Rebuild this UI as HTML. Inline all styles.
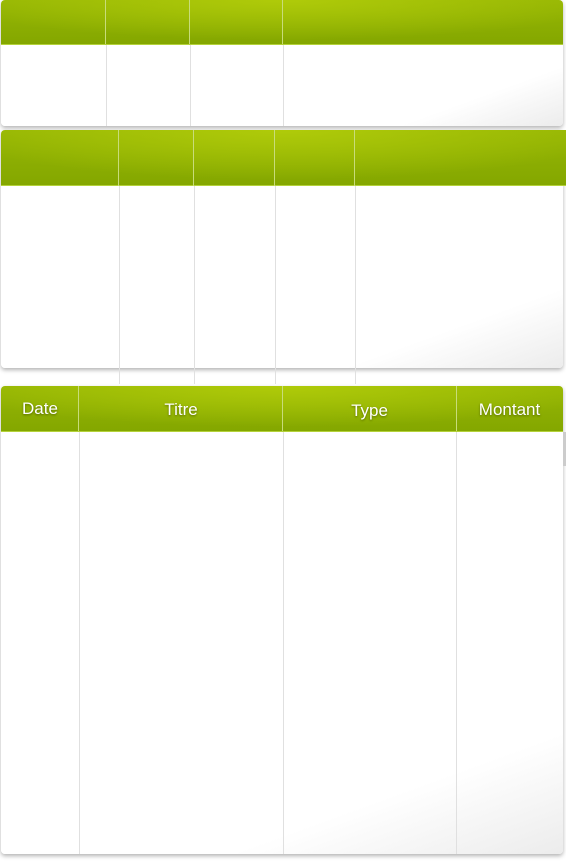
<!DOCTYPE html>
<html><head><meta charset="utf-8"><style>
*{margin:0;padding:0;box-sizing:border-box}
body{width:566px;height:863px;background:#fff;position:relative;overflow:hidden;font-family:"Liberation Sans",sans-serif}
.t{position:absolute;border-radius:4px;background:linear-gradient(160deg,#fff 82%,#ececec);box-shadow:0 2px 4px rgba(0,0,0,.3)}
.h{position:absolute;left:0;top:0;right:0;background:radial-gradient(ellipse 60% 90% at 50% 0%,rgba(178,205,10,.9),rgba(178,205,10,0)),linear-gradient(180deg,#96b604,#84a700);border-bottom:1px solid #b4d23a;border-radius:4px 4px 0 0}
.v{position:absolute;width:1px;background:#e0e0e0}
.hv{position:absolute;width:1px;background:#c8dc7a;top:0}
.lb{position:absolute;color:#fff;font-size:17px;text-shadow:0 1px 2px rgba(0,0,0,.4);text-align:center}
</style></head><body>
<div class="t" style="left:1px;top:0;width:562px;height:126px">
<div class="h" style="height:45px"></div>
<div class="hv" style="left:104px;height:44px"></div><div class="hv" style="left:188px;height:44px"></div><div class="hv" style="left:281px;height:44px"></div>
<div class="v" style="left:105px;top:45px;height:81px"></div><div class="v" style="left:189px;top:45px;height:81px"></div><div class="v" style="left:282px;top:45px;height:81px"></div>
</div>
<div class="t" style="left:1px;top:130px;width:562px;height:238px">
<div class="h" style="height:56px;right:-3px;border-radius:4px 0 0 0"></div>
<div class="hv" style="left:117px;height:56px"></div><div class="hv" style="left:192px;height:56px"></div><div class="hv" style="left:273px;height:56px"></div><div class="hv" style="left:353px;height:56px"></div>
</div>
<div class="v" style="left:119px;top:186px;height:198px"></div><div class="v" style="left:194px;top:186px;height:198px"></div><div class="v" style="left:275px;top:186px;height:198px"></div><div class="v" style="left:355px;top:186px;height:198px"></div>
<div class="t" style="left:1px;top:386px;width:562px;height:468px">
<div class="h" style="height:46px"></div>
<div class="hv" style="left:77px;height:45px"></div><div class="hv" style="left:281px;height:45px"></div><div class="hv" style="left:455px;height:45px"></div>
<div class="v" style="left:78px;top:46px;height:422px"></div><div class="v" style="left:282px;top:46px;height:422px"></div><div class="v" style="left:455px;top:46px;height:422px"></div>
<div class="lb" style="left:0;width:78px;top:13px">Date</div>
<div class="lb" style="left:78px;width:204px;top:14px">Titre</div>
<div class="lb" style="left:282px;width:173px;top:15px">Type</div>
<div class="lb" style="left:455px;width:107px;top:14px">Montant</div>
</div>
<div style="position:absolute;left:563px;top:432px;width:3px;height:34px;background:#ccc"></div>
</body></html>
